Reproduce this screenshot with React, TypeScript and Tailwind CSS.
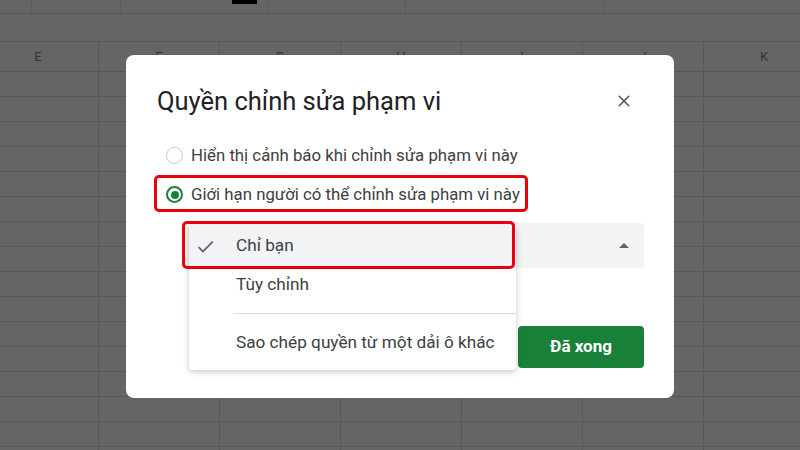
const COLS = ["E", "F", "G", "H", "I", "J", "K"];
const ROWS = Array.from({ length: 16 }, (_, i) => i);

function Sheet() {
  return (
    <div className="flex flex-col">
      {/* toolbar strip */}
      <div className="flex h-[14px] border-b border-[#565656]">
        <div className="w-[32px] shrink-0 border-r border-[#5c5c5c]" />
        <div className="w-[89px] shrink-0 border-r border-[#5c5c5c]" />
        <div className="w-[148px] shrink-0 border-r border-[#5c5c5c]">
          <div className="ml-[111px] h-[4px] w-[25px] bg-black" />
        </div>
        <div className="w-[137px] shrink-0 border-r border-[#5c5c5c]" />
        <div className="w-[199px] shrink-0 border-r border-[#5c5c5c]" />
      </div>
      {/* formula bar */}
      <div className="h-[28px] border-b border-[#565656]" />
      {/* column headers */}
      <div className="ml-[-22px] flex h-[30px] border-b border-[#565656]">
        {COLS.map((c) => (
          <div
            key={c}
            className="flex w-[121px] shrink-0 items-center justify-center border-r border-[#585858] text-[13px] text-[#333]"
          >
            {c}
          </div>
        ))}
      </div>
      {ROWS.map((r) => (
        <div key={r} className="ml-[-22px] flex h-[25px] border-b border-[#585858]">
          {COLS.map((c) => (
            <div key={c} className="w-[121px] shrink-0 border-r border-[#585858]" />
          ))}
        </div>
      ))}
    </div>
  );
}

function Radio({ checked }: { checked?: boolean }) {
  if (checked) {
    return (
      <div className="flex h-[17px] w-[17px] shrink-0 items-center justify-center rounded-full border-2 border-[#188038]">
        <div className="h-[8px] w-[8px] rounded-full bg-[#188038]" />
      </div>
    );
  }
  return <div className="h-[17px] w-[17px] shrink-0 rounded-full border-[1.5px] border-[#c4c7ca]" />;
}

function Dialog() {
  return (
    <div className="absolute left-[126px] top-[55px] h-[343px] w-[548px] rounded-[8px] bg-white pl-[31px] pr-[30px] pt-[30px]">
      <div className="flex h-[32px] items-center justify-between">
        <h1 className="text-[25.5px] text-[#202124]">Quyền chỉnh sửa phạm vi</h1>
        <div className="flex h-[40px] w-[40px] items-center justify-center">
          <svg width="20" height="20" viewBox="0 0 24 24" fill="#5f6368">
            <path d="M19 6.41L17.59 5 12 10.59 6.41 5 5 6.41 10.59 12 5 17.59 6.41 19 12 13.41 17.59 19 19 17.59 13.41 12z" />
          </svg>
        </div>
      </div>

      <div className="mt-[19px] flex flex-col text-[16.8px] text-[#3c4043]">
        <label className="flex h-[39px] items-center gap-[8px] pl-[9px]">
          <Radio />
          <span>Hiển thị cảnh báo khi chỉnh sửa phạm vi này</span>
        </label>
        <label className="flex h-[39px] items-center gap-[8px] pl-[9px]">
          <Radio checked />
          <span>Giới hạn người có thể chỉnh sửa phạm vi này</span>
        </label>
      </div>

      <div className="ml-[26px] mt-[9px] flex h-[45px] items-center justify-end rounded-[4px] bg-[#f1f3f4] pr-[8px]">
        <svg width="24" height="24" viewBox="0 0 24 24" fill="#5f6368">
          <path d="M7 14l5-5 5 5z" />
        </svg>
      </div>

      <div className="mt-[58px] flex justify-end">
        <button className="h-[42px] w-[126px] rounded-[4px] bg-[#188038] text-[17px] font-bold text-white">
          Đã xong
        </button>
      </div>

      {/* dropdown menu */}
      <div className="absolute left-[63px] top-[169px] w-[327px] rounded-[4px] bg-white pb-[9px] text-[17.2px] text-[#3c4043] shadow-[0_2px_6px_rgba(0,0,0,0.22)]">
        <div className="flex h-[44px] items-center bg-[#f1f3f4]">
          <div className="flex w-[32px] justify-center">
            <svg width="21" height="21" viewBox="0 0 24 24" fill="#5f6368">
              <path d="M9 16.17L4.83 12l-1.42 1.41L9 19 21 7l-1.41-1.41z" />
            </svg>
          </div>
          <span className="pl-[15px]">Chỉ bạn</span>
        </div>
        <div className="flex h-[34px] items-center pl-[47px]">Tùy chỉnh</div>
        <div className="ml-[44px] mt-[11px] mb-[11px] h-px bg-[#dadce0]" />
        <div className="flex h-[36px] items-center pl-[47px]">Sao chép quyền từ một dải ô khác</div>
      </div>

      {/* annotations */}
      <div className="absolute left-[28px] top-[120px] h-[37px] w-[374px] rounded-[5px] border-[3px] border-[#e8000b]" />
      <div className="absolute left-[56px] top-[166px] h-[48px] w-[333px] rounded-[5px] border-[3px] border-[#e8000b]" />
    </div>
  );
}

export default function App() {
  return (
    <div className="relative h-[450px] w-[800px] overflow-hidden bg-[#656565] font-['Roboto',sans-serif]">
      <Sheet />
      <Dialog />
    </div>
  );
}
